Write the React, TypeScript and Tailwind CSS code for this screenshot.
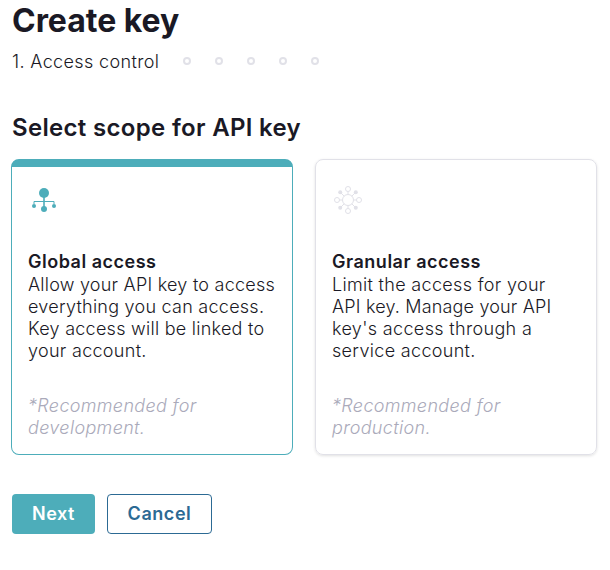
function GlobalIcon() {
  return (
    <svg className="block h-8 w-8" viewBox="0 0 32 32" fill="none" stroke="#4dadba">
      <path d="M16 11v12" strokeWidth="1.6" />
      <path d="M6 20v-2.5h20V20" strokeWidth="1" />
      <g fill="#4dadba" stroke="none">
        <circle cx="16" cy="9" r="5" />
        <circle cx="16" cy="25" r="3" />
        <circle cx="6" cy="22" r="2" />
        <circle cx="26" cy="22" r="2" />
      </g>
    </svg>
  );
}

function GranularIcon() {
  return (
    <svg className="block h-8 w-8" viewBox="0 0 32 32" fill="none" stroke="#e1e1e8">
      <circle cx="16" cy="16" r="5.5" />
      <circle cx="16" cy="5" r="2.5" />
      <circle cx="16" cy="27" r="2.5" />
      <circle cx="5" cy="16" r="2.5" />
      <circle cx="27" cy="16" r="2.5" />
      <path d="M16 7.5v3M16 21.5v3M7.5 16h3M21.5 16h3M8.2 8.2l4 4M23.8 8.2l-4 4M8.2 23.8l4-4M23.8 23.8l-4-4" />
      <g fill="#e1e1e8" stroke="none">
        <circle cx="8.2" cy="8.2" r="2" />
        <circle cx="23.8" cy="8.2" r="2" />
        <circle cx="8.2" cy="23.8" r="2" />
        <circle cx="23.8" cy="23.8" r="2" />
      </g>
    </svg>
  );
}

export default function App() {
  return (
    <main className="h-[570px] w-[610px] bg-white pl-3 font-['Inter',sans-serif] text-lg font-light leading-[22px] tracking-[0.36px] text-[#1a1925]">
      <h1 className="h-[43px] text-[32px] font-bold leading-[42px] tracking-[-0.03px]">Create key</h1>
      <div className="mt-2 flex h-[22px] items-center">
        <span className="w-[171px]">1. Access control</span>
        <div className="mb-0.5 flex gap-6">
          {[2, 3, 4, 5, 6].map((step) => (
            <span key={step} className="h-2 w-2 rounded-full border-2 border-[#e1e1e8]" />
          ))}
        </div>
      </div>
      <h2 className="mt-10 text-2xl font-semibold leading-[30px] tracking-[0.32px]">Select scope for API key</h2>
      <div className="-ml-px mt-4 flex gap-[22px]">
        <section className="h-[296px] w-[282px] rounded-lg border border-t-8 border-[#4dadba] px-4 pt-[17px]">
          <GlobalIcon />
          <h3 className="mt-[35px] font-semibold leading-[22px] tracking-[0.51px]">Global access</h3>
          <p className="mt-px flex flex-col whitespace-nowrap">
            <span className="tracking-[0.23px]">Allow your API key to access</span>
            <span className="tracking-[0.25px]">everything you can access.</span>
            <span className="tracking-[0.26px]">Key access will be linked to</span>
            <span className="tracking-[0.3px]">your account.</span>
          </p>
          <p className="mt-[33px] italic text-[#aaaaba] tracking-[0.33px]">
            *Recommended for
            <br />
            development.
          </p>
        </section>
        <section className="h-[296px] w-[282px] rounded-lg border border-[#e1e1e8] px-4 pt-6 shadow-[0_1px_3px_rgba(0,0,0,0.12)]">
          <GranularIcon />
          <h3 className="mt-[35px] font-semibold leading-[22px] tracking-[0.51px]">Granular access</h3>
          <p className="mt-px flex flex-col whitespace-nowrap">
            <span className="tracking-[0.32px]">Limit the access for your</span>
            <span className="tracking-[0.17px]">API key. Manage your API</span>
            <span className="tracking-[0.34px]">key's access through a</span>
            <span className="tracking-[0.32px]">service account.</span>
          </p>
          <p className="mt-[33px] italic text-[#aaaaba] tracking-[0.33px]">
            *Recommended for
            <br />
            production.
          </p>
        </section>
      </div>
      <div className="mt-[39px] flex gap-3">
        <button className="h-10 w-[83px] rounded bg-[#4dadba] font-semibold tracking-[0.55px] text-white">Next</button>
        <button className="h-10 w-[105px] rounded border border-[#2c6a94] bg-white font-semibold tracking-[0.55px] text-[#2c6a94]">
          Cancel
        </button>
      </div>
    </main>
  );
}
